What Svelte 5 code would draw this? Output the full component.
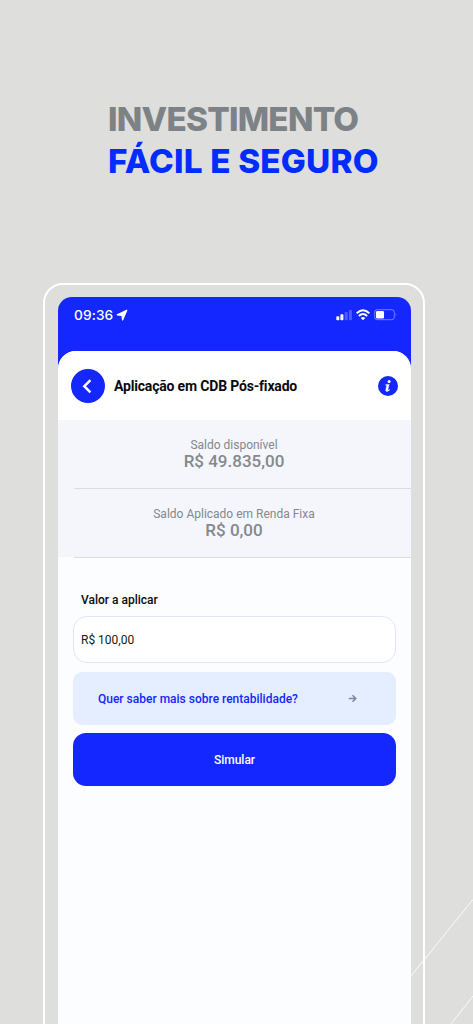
<script>
  let amount = $state('R$ 100,00');
  const balances = [
    { label: 'Saldo disponível', value: 'R$ 49.835,00' },
    { label: 'Saldo Aplicado em Renda Fixa', value: 'R$ 0,00' }
  ];
</script>

<main class="promo">
  <svg class="lines" viewBox="0 0 473 1024" aria-hidden="true">
    <path d="M411 976L473 899.5M451 1024L473 996" />
  </svg>
  <h1><span class="grey">INVESTIMENTO</span><span class="blue">FÁCIL E SEGURO</span></h1>
  <section class="phone">
    <div class="screen">
      <div class="status">
        <span class="clock">09:36</span>
        <svg class="loc" width="12" height="12" viewBox="0 0 12 12"><path d="M10.8 1.2L1.2 5.8L5.9 6.3L6.6 10.9z" fill="#fff" stroke="#fff" stroke-width="1.2" stroke-linejoin="round" /></svg>
        <svg class="signals" width="62" height="14" viewBox="0 0 62 14">
          <g fill="#fff">
            <rect x="0.3" y="8.3" width="3" height="3.9" rx=".8" />
            <rect x="4.4" y="6.2" width="3" height="6" rx=".8" />
            <rect x="8.7" y="4" width="3" height="8.2" rx=".8" opacity=".25" />
            <rect x="12.9" y="2" width="3" height="10.2" rx=".8" opacity=".25" />
          </g>
          <g fill="none" stroke="#fff" stroke-width="2">
            <path d="M20.7 5.2Q27 -.6 33.3 5.2" />
            <path d="M22.9 7.9Q27 4.2 31.1 7.9" />
          </g>
          <path d="M27 12.3L24.7 9.9Q27 8 29.3 9.9z" fill="#fff" />
          <rect x="38.7" y="1.7" width="19.6" height="10" rx="2.5" fill="none" stroke="#fff" stroke-opacity=".4" />
          <rect x="40" y="3" width="8" height="7.4" rx="1.2" fill="#fff" />
          <path d="M59.7 5q1.5 1.7 0 3.4z" fill="#fff" opacity=".45" />
        </svg>
      </div>
      <div class="content">
        <header>
          <button class="back" aria-label="Voltar">
            <svg width="34" height="34" viewBox="0 0 34 34"><path d="M18.5 12L13.3 17.2L18.5 22.4" fill="none" stroke="#fff" stroke-width="2.5" stroke-linecap="square" /></svg>
          </button>
          <h2>Aplicação em CDB Pós-fixado</h2>
          <svg class="info" width="20" height="20" viewBox="0 0 20 20">
            <circle cx="10" cy="10" r="10" fill="#1427fe" />
            <circle cx="11.1" cy="5.4" r="1.5" fill="#fff" />
            <path d="M7.9 8.4H11.2L9.9 13.7Q9.9 14.3 11.6 13.4L11.3 14.5Q7.6 16.5 7.7 14.2L8.7 9.6L7.6 9.3z" fill="#fff" stroke="#fff" stroke-width=".4" stroke-linejoin="round" />
          </svg>
        </header>
        <div class="balances">
          {#each balances as item}
            <div class="balance">
              <span class="label">{item.label}</span>
              <strong>{item.value}</strong>
            </div>
          {/each}
        </div>
        <div class="form">
          <label for="amount">Valor a aplicar</label>
          <input id="amount" bind:value={amount} />
          <button class="more">
            <span>Quer saber mais sobre rentabilidade?</span>
            <svg width="9" height="9" viewBox="0 0 9 9"><path d="M.8 4.5H7.4M4.5 1.2L7.8 4.5L4.5 7.8" fill="none" stroke="#8083a5" stroke-width="1.5" /></svg>
          </button>
          <button class="submit">Simular</button>
        </div>
      </div>
    </div>
  </section>
</main>

<style>
  :global(body) { margin: 0; }
  .promo {
    position: relative;
    box-sizing: border-box;
    width: 473px;
    height: 1024px;
    overflow: hidden;
    padding-top: 98px;
    background: #dededc;
    font-family: Roboto, sans-serif;
  }
  .lines { position: absolute; inset: 0; width: 473px; height: 1024px; fill: none; stroke: #fbfbfa; stroke-width: 1; }
  h1 {
    display: flex;
    flex-direction: column;
    height: 185px;
    margin: 0 0 0 108px;
    font: 800 33.3px/42px Inter, sans-serif;
    white-space: nowrap;
  }
  .grey { color: #7d8286; letter-spacing: -0.75px; }
  .blue { color: #002dff; letter-spacing: 0.2px; }
  .phone {
    position: relative;
    box-sizing: border-box;
    width: 382px;
    height: 780px;
    margin-left: 43px;
    padding: 12px 12px 0 13px;
    border: 2px solid #fff;
    border-radius: 20px;
  }
  .screen { overflow: hidden; height: 760px; border-radius: 14px 14px 0 0; background: linear-gradient(#1427fe 90px, #fcfdff 90px); }
  .status { display: flex; box-sizing: border-box; height: 54px; padding: 10px 13px 0 16px; color: #fff; }
  .clock { font: 500 13.7px/16px Inter, sans-serif; letter-spacing: 0.1px; }
  .loc { margin: 2px 0 0 3px; }
  .signals { margin: 1px 0 0 auto; }
  .content { height: 706px; overflow: hidden; border-radius: 18px 18px 0 0; background: #fcfdff; }
  header { display: flex; align-items: center; box-sizing: border-box; height: 69px; padding: 0 13px; background: #fff; }
  button { padding: 0; border: 0; font-family: inherit; }
  .back { width: 34px; height: 34px; border-radius: 50%; background: #1427fe; }
  .back svg { display: block; }
  h2 { margin: 0 0 0 9px; color: #0b0b0d; font-size: 14px; font-weight: 700; line-height: 18px; letter-spacing: -0.18px; white-space: nowrap; }
  .info { margin-left: auto; }
  .balances { height: 137px; background: #f4f6fb; }
  .balance {
    display: flex;
    flex-direction: column;
    align-items: center;
    box-sizing: border-box;
    height: 69px;
    margin-left: 16px;
    padding: 18px 17px 0 0;
    border-bottom: 1px solid #dadce1;
    color: #85888d;
  }
  .balance + .balance { height: 68.5px; }
  .label { font-size: 12px; line-height: 15px; }
  strong { margin-top: -1px; font-size: 17px; font-weight: 500; line-height: 18px; }
  .form { display: flex; flex-direction: column; padding: 34px 15px 0; }
  label { box-sizing: border-box; height: 25px; padding: 1px 0 0 8px; color: #0b0b0d; font-size: 12px; font-weight: 500; line-height: 17px; }
  input {
    box-sizing: border-box;
    width: 323px;
    height: 47px;
    padding: 0 7px;
    border: 1px solid #e1e6f5;
    border-radius: 14px;
    background: #fff;
    color: #17181b;
    font: 400 12px Roboto, sans-serif;
  }
  .more {
    display: flex;
    align-items: center;
    justify-content: space-between;
    height: 53px;
    margin: 9px 0 8px;
    padding: 0 39px 0 25px;
    border-radius: 9px;
    background: #e4eeff;
    color: #1427fe;
    font-size: 12px;
    font-weight: 500;
  }
  .submit { height: 53px; border-radius: 13px; background: #1427fe; color: #fff; font-size: 12px; font-weight: 500; }
</style>
